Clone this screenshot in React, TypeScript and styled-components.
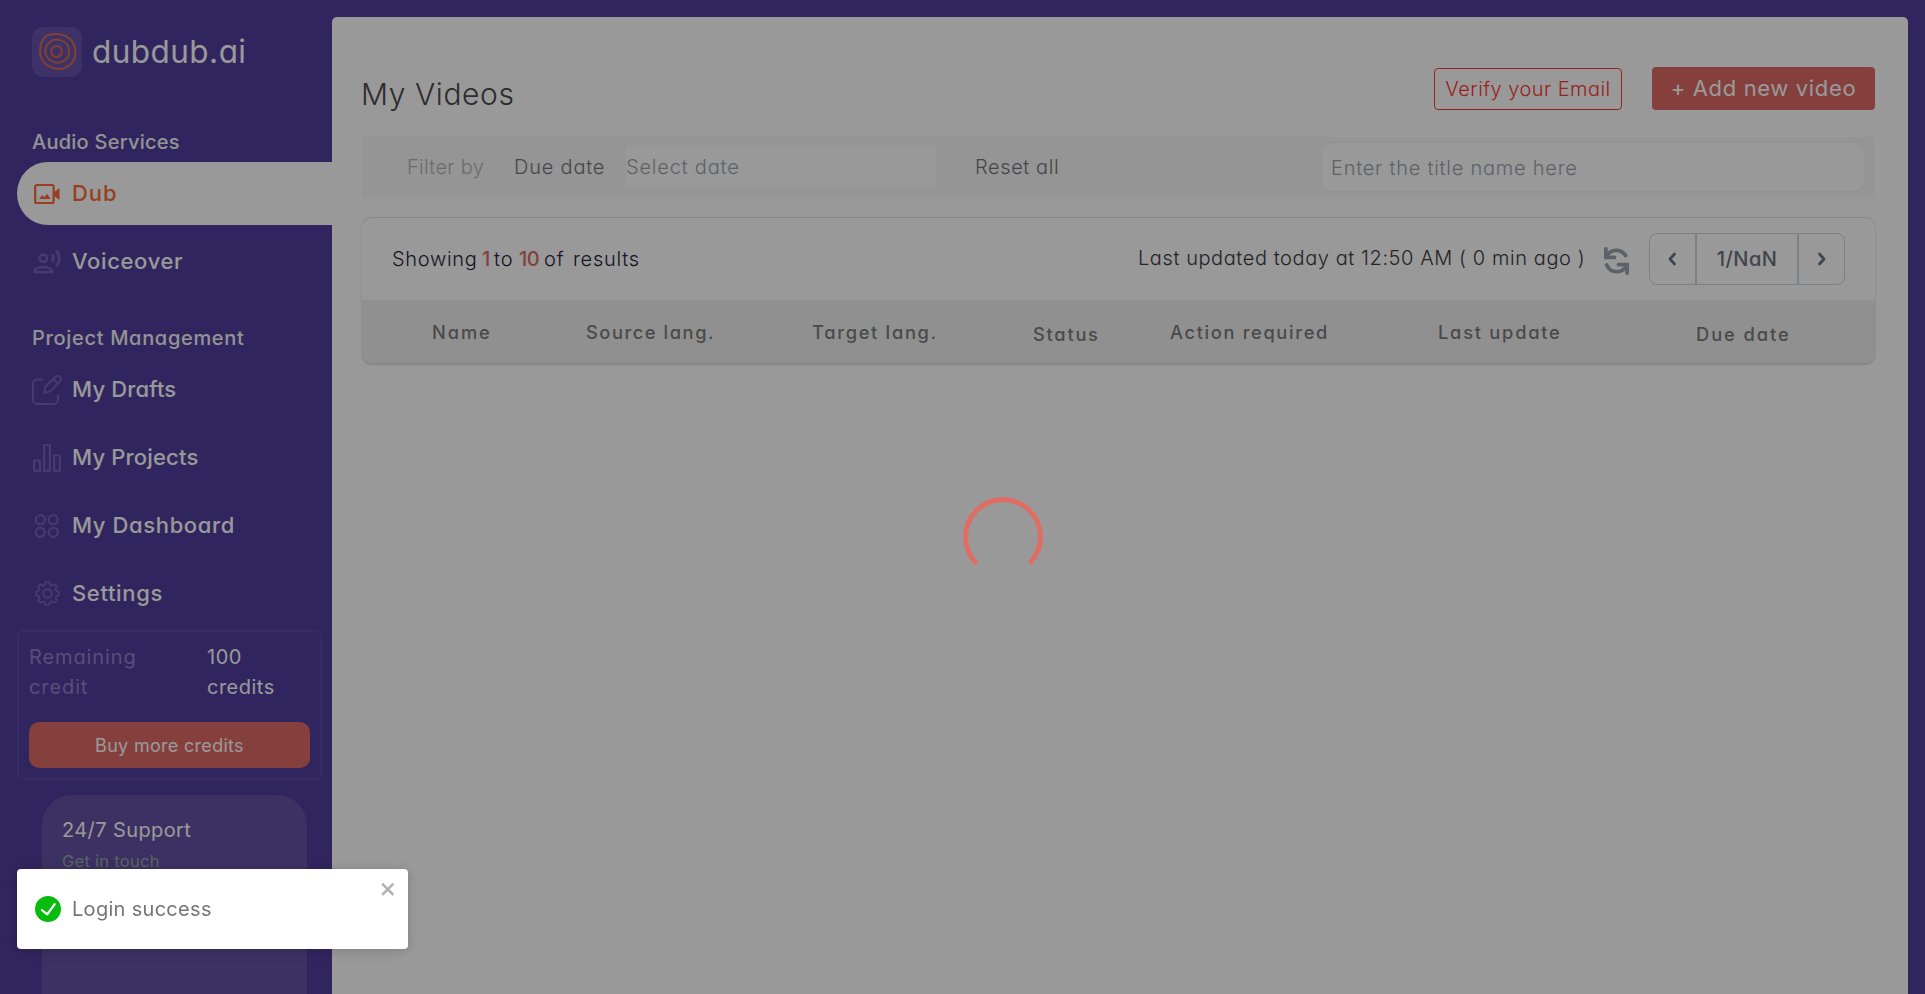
import React from "react";
import styled, { createGlobalStyle } from "styled-components";
import { BsGear } from "react-icons/bs";
import { MdOutlineRecordVoiceOver } from "react-icons/md";

const GlobalStyle = createGlobalStyle`
  *, *::before, *::after { box-sizing: border-box; }
  body {
    margin: 0;
    overflow: hidden;
    background: #503e9d;
    font-family: Inter, "Open Sans", sans-serif;
    font-feature-settings: "cv11";
    font-size: 20px;
    color: #111827;
  }
  button, input { font: inherit; font-feature-settings: inherit; letter-spacing: inherit; }
  svg { display: block; flex: none; }
`;

const Page = styled.div`
  display: flex;
  height: 994px;
  padding-right: 17px;
  overflow: hidden;
`;

/* ---------- sidebar ---------- */

const Sidebar = styled.aside`
  width: 332px;
  flex: none;
  display: flex;
  flex-direction: column;
  color: #fff;
`;

const Brand = styled.div`
  display: flex;
  align-items: center;
  gap: 10px;
  height: 50px;
  margin: 27px 0 50px 32px;
  font-size: 31.5px;
  letter-spacing: 0.45px;
`;

const BrandName = styled.span`
  padding-bottom: 2px;
`;

const BrandMark = styled.div`
  width: 50px;
  height: 50px;
  border-radius: 11px;
  background: #6654ac;
`;

const SectionTitle = styled.h2<{ $spacing: number }>`
  margin: 0 0 5px 32px;
  line-height: 30px;
  font-size: 20px;
  font-weight: 500;
  letter-spacing: ${(p) => p.$spacing}px;
  color: #f6f6f6;
`;

const Nav = styled.nav`
  display: flex;
  flex-direction: column;
  gap: 5px;

  & + h2 { margin-top: 30px; }
`;

const NavItem = styled.a<{ $active?: boolean; $spacing: number }>`
  display: flex;
  align-items: center;
  gap: 10px;
  height: 63px;
  margin-left: 17px;
  padding-left: 15px;
  border-radius: 31px 0 0 31px;
  font-size: 22px;
  font-weight: 500;
  letter-spacing: ${(p) => p.$spacing}px;
  background: ${(p) => (p.$active ? "#fff" : "transparent")};
  color: ${(p) => (p.$active ? "#fc6a38" : "#fff")};

  svg { color: ${(p) => (p.$active ? "#fc6a38" : "#7561be")}; }
`;

const NavLabel = styled.span`
  padding-bottom: 1px;
`;

const IconSlot = styled.span`
  width: 30px;
  display: flex;
  justify-content: center;
`;

const CreditBox = styled.section`
  width: 305px;
  margin: 5px 0 0 17px;
  padding: 10px;
  border: 2px solid #5b49a7;
  border-radius: 6px;
`;

const CreditRow = styled.div`
  display: grid;
  grid-template-columns: 178px 1fr;
  line-height: 30px;
`;

const CreditLabel = styled.span`
  width: 110px;
  color: #9484cb;
  letter-spacing: 0.9px;
`;

const CreditValue = styled.span`
  width: 72px;
  color: #fff;
  letter-spacing: 0.5px;
`;

const BuyButton = styled.button`
  display: block;
  width: 100%;
  height: 46px;
  margin-top: 20px;
  padding: 0;
  border: 0;
  border-radius: 10px;
  background: #de6b66;
  color: #fff;
  font-size: 18px;
  letter-spacing: 0.3px;
`;

const Support = styled.section`
  flex: 1;
  width: 265px;
  margin: 15px 0 0 42px;
  padding: 20px;
  border-radius: 30px 30px 0 0;
  background: #6452a3;
`;

const SupportTitle = styled.div`
  line-height: 30px;
  letter-spacing: 0.4px;
`;

const SupportLink = styled.div`
  margin-top: 1px;
  line-height: 30px;
  font-size: 16.5px;
  letter-spacing: 0.28px;
  color: #93a8a4;
`;

/* ---------- main panel ---------- */

const Main = styled.main`
  flex: 1;
  margin-top: 17px;
  padding: 50px 33px 0 30px;
  border-radius: 5px 5px 0 0;
  background: #fff;
`;

const Header = styled.header`
  display: flex;
  align-items: flex-start;
  gap: 30px;
  height: 70px;
`;

const Title = styled.h1`
  margin: 0 auto 0 -1px;
  padding-top: 6px;
  line-height: 43px;
  font-size: 30px;
  font-weight: 300;
  letter-spacing: 0.6px;
  color: #4c4c4c;
`;

const VerifyButton = styled.button`
  width: 188px;
  height: 42px;
  margin-top: 1px;
  padding: 0;
  border: 1px solid #ff3832;
  border-radius: 4px;
  background: none;
  color: #ff3832;
  font-weight: 300;
  letter-spacing: 0.45px;
`;

const AddButton = styled.button`
  width: 223px;
  height: 43px;
  padding: 0 0 1px;
  border: 0;
  border-radius: 4px;
  background: #de6b66;
  color: #fff;
  font-size: 22px;
  letter-spacing: 0.65px;
`;

const FilterBar = styled.div`
  display: flex;
  align-items: center;
  height: 60px;
  padding: 0 10px 0 45px;
  background: #f8f8f8;
  font-weight: 300;
  letter-spacing: 0.8px;
  color: #777;
`;

const FilterLabel = styled.span`
  width: 107px;
  letter-spacing: 0.3px;
  color: #b4b4b4;
`;

const FilterName = styled.span`
  width: 112px;
`;

const DateInput = styled.input`
  width: 310px;
  height: 40px;
  padding: 0;
  border: 0;
  background: #fff;
  &::placeholder { color: #9ca3af; opacity: 1; }
`;

const ResetAll = styled.span`
  margin: 0 auto 0 39px;
  letter-spacing: 0.6px;
`;

const SearchInput = styled.input`
  width: 544px;
  height: 50px;
  padding: 2px 9px 0;
  border: 1px solid #f3f3f3;
  border-radius: 12px;
  background: #fff;
  letter-spacing: 0.76px;
  &::placeholder { color: #9ca3af; opacity: 1; }
`;

const Card = styled.section`
  margin-top: 21px;
  border-radius: 9px;
  box-shadow: 0 -1px 0 rgba(0, 0, 0, 0.08), 0 0 2px rgba(0, 0, 0, 0.14), 0 2px 2px rgba(0, 0, 0, 0.12);
`;

const CardTop = styled.div`
  display: flex;
  align-items: center;
  height: 82px;
  padding: 0 30px;
  font-weight: 300;
`;

const Word = styled.span<{ $width: number; $spacing: number; $accent?: boolean }>`
  width: ${(p) => p.$width}px;
  white-space: nowrap;
  letter-spacing: ${(p) => p.$spacing}px;
  color: ${(p) => (p.$accent ? "#de6b66" : "#26263a")};
  font-weight: ${(p) => (p.$accent ? 500 : 300)};
`;

const Updated = styled.span`
  width: 466px;
  margin-left: auto;
  padding-bottom: 2px;
  white-space: nowrap;
  letter-spacing: 0.58px;
  color: #3c3c3c;
`;

const RefreshButton = styled.span`
  margin: 4px 20px 0 0;
  color: #9ca3af;
`;

const Pager = styled.div`
  display: flex;
  height: 52px;
  color: #6b7280;
`;

const PagerCell = styled.span<{ $width: number }>`
  display: flex;
  align-items: center;
  justify-content: center;
  width: ${(p) => p.$width}px;
  border: 1px solid #d1d5db;
  font-weight: 500;
  letter-spacing: 0.45px;

  &:first-child { border-radius: 8px 0 0 8px; }
  &:last-child { border-radius: 0 8px 8px 0; }
`;

const TableHead = styled.div`
  display: grid;
  grid-template-columns: 154px 226px 221px 137px 268px 258px 1fr;
  align-items: center;
  height: 63px;
  padding-left: 70px;
  border-radius: 0 0 9px 9px;
  background: #f1f1f1;
  color: #7c7c7c;
  font-size: 18.3px;
  font-weight: 500;
`;

const HeadCell = styled.span<{ $spacing: number; $lowered?: boolean }>`
  padding-top: ${(p) => (p.$lowered ? 4 : 0)}px;
  letter-spacing: ${(p) => p.$spacing}px;
  white-space: nowrap;
`;

/* ---------- layers over the page ---------- */

const Overlay = styled.div`
  position: fixed;
  inset: 0;
  background: rgba(0, 0, 0, 0.4);
`;

const Spinner = styled.div`
  position: absolute;
  left: 963px;
  top: 497px;
  width: 80px;
  height: 80px;
  border: 5px solid #e06d63;
  border-bottom-color: transparent;
  border-radius: 50%;
`;

const Toast = styled.div`
  position: fixed;
  left: 17px;
  top: 869px;
  display: flex;
  align-items: center;
  gap: 11px;
  width: 391px;
  height: 80px;
  padding-left: 18px;
  border-radius: 4px;
  background: #fff;
  box-shadow: 0 1px 10px rgba(0, 0, 0, 0.1), 0 2px 15px rgba(0, 0, 0, 0.1);
  color: #757575;
  letter-spacing: 0.3px;
`;

const ToastClose = styled.span`
  position: absolute;
  right: 11px;
  top: 10px;
  color: rgba(0, 0, 0, 0.3);
`;

/* ---------- drawings ---------- */

const LogoIcon = () => (
  <svg width="50" height="50" viewBox="0 0 50 50" fill="none" stroke="#dc6a50" strokeWidth="2">
    <path d="M16 8.2C21 6.4 29 6.6 34 9.2C39 12 42.8 17.500 43.300 23C43.800 28 42.800 33 39.500 36.200C36 39.600 30.500 42.200 26 42C21 41.600 14 38.500 11 34C8.200 30 7.600 25.500 8.200 21C9 15.500 11.500 10 16 8.200Z" />
    <path d="M19.500 14C22 12 26 12.400 29.500 13.600C33.500 15 36.600 18.500 37 22.500C37.400 26 36.600 30 33.800 32.200C31 34.400 27 36.400 23.800 35.600C20 34.600 15.600 31.600 14.200 28C12.800 24.500 13 21.500 14.600 19C16 16.800 17.600 15.600 19.500 14Z" />
    <path d="M22 19.600C24 18.700 26.600 18.800 28.200 20.400C29.800 22 30.300 24.500 29.300 26.800C28.200 29 25.600 30.400 23.300 29.900C20.800 29.300 19.300 27.200 19.300 24.600C19.300 22.400 20.200 20.400 22 19.600Z" />
  </svg>
);

const DubIcon = () => (
  <svg width="26" height="22" viewBox="0 0 26 22">
    <rect x="1.200" y="2" width="18.400" height="18" rx="1.500" fill="none" stroke="currentColor" strokeWidth="2.200" />
    <path d="M5 16 8.200 12 10.200 14.300 13 10.800 16.500 16Z" fill="currentColor" />
    <path d="M19.500 9.500 25.500 5V17L19.500 12.500Z" fill="currentColor" />
  </svg>
);

const DraftIcon = () => (
  <svg width="30" height="32" viewBox="0 0 30 32" fill="none" stroke="currentColor" strokeWidth="2" strokeLinecap="round" strokeLinejoin="round">
    <path d="M10 5.500H5A4 4 0 0 0 1 9.500V26A4 4 0 0 0 5 30H22A4 4 0 0 0 26 26V21" />
    <path d="M12 19 13.500 12.800 23.500 2.800A3.200 3.200 0 0 1 28 7.400L18.300 17.300Z" />
    <path d="M21.300 5.200 25.700 9.600" />
  </svg>
);

const BarsIcon = () => (
  <svg width="28" height="28" viewBox="0 0 28 28" fill="none" stroke="currentColor" strokeWidth="2.200" strokeLinejoin="round">
    <rect x="1.100" y="16.500" width="5.800" height="10.400" />
    <rect x="11.100" y="1.100" width="5.800" height="25.800" />
    <rect x="21.100" y="11.500" width="5.800" height="15.400" />
  </svg>
);

const DashboardIcon = () => (
  <svg width="26" height="26" viewBox="0 0 26 26" fill="none" stroke="currentColor" strokeWidth="2.300">
    <circle cx="6.300" cy="6.700" r="4.500" />
    <circle cx="19.300" cy="6.700" r="4.500" />
    <circle cx="6.300" cy="19.300" r="4.500" />
    <circle cx="19.300" cy="19.300" r="4.500" />
  </svg>
);

const RefreshIcon = () => (
  <svg width="25" height="28" viewBox="0 0 25 28" fill="none" stroke="currentColor" strokeWidth="3.800" strokeLinecap="round">
    <path d="M1.900 2V10.300H10.500" strokeLinejoin="miter" />
    <path d="M2.500 9.500C6 1.800 18 .500 22.300 10" strokeLinecap="butt" />
    <path d="M23.100 26V17.700H14.500" />
    <path d="M22.500 18.500C19 26.200 7 27.500 2.700 18" />
  </svg>
);

const Chevron = ({ d }: { d: string }) => (
  <svg width="9" height="14" viewBox="0 0 9 14" fill="none" stroke="currentColor" strokeWidth="2.700" strokeLinecap="round" strokeLinejoin="round">
    <path d={d} />
  </svg>
);

const SuccessIcon = () => (
  <svg width="26" height="26" viewBox="0 0 24 24" fill="#07bc0c">
    <path d="M12 0a12 12 0 1012 12A12.014 12.014 0 0012 0zm6.927 8.200l-6.845 9.289a1.011 1.011 0 01-1.430.188l-4.888-3.908a1 1 0 111.250-1.562l4.076 3.261 6.227-8.451a1 1 0 111.610 1.183z" />
  </svg>
);

const CloseIcon = () => (
  <svg width="17.500" height="20" viewBox="0 0 14 16" fill="currentColor">
    <path d="M7.710 8.230l3.750 3.750-1.480 1.480-3.750-3.750-3.750 3.750L1 11.980l3.750-3.750L1 4.480 2.480 3l3.750 3.750L9.980 3l1.480 1.480-3.750 3.750z" />
  </svg>
);

/* ---------- data ---------- */

const services = [
  { label: "Dub", icon: <DubIcon />, spacing: 0.9, active: true },
  { label: "Voiceover", icon: <MdOutlineRecordVoiceOver size={30} />, spacing: 0.65 },
];

const management = [
  { label: "My Drafts", icon: <DraftIcon />, spacing: 0.15 },
  { label: "My Projects", icon: <BarsIcon />, spacing: 0.17 },
  { label: "My Dashboard", icon: <DashboardIcon />, spacing: 0.62 },
  { label: "Settings", icon: <BsGear size={25} strokeWidth={0.4} />, spacing: 0.65 },
];

const columns = [
  { label: "Name", spacing: 1.9 },
  { label: "Source lang.", spacing: 1.55 },
  { label: "Target lang.", spacing: 1.7 },
  { label: "Status", spacing: 1.75, lowered: true },
  { label: "Action required", spacing: 1.65 },
  { label: "Last update", spacing: 1.75 },
  { label: "Due date", spacing: 1.95, lowered: true },
];

type Entry = { label: string; icon: React.ReactNode; spacing: number; active?: boolean };

const NavList = ({ entries }: { entries: Entry[] }) => (
  <Nav>
    {entries.map((e) => (
      <NavItem key={e.label} $active={e.active} $spacing={e.spacing}>
        <IconSlot>{e.icon}</IconSlot>
        <NavLabel>{e.label}</NavLabel>
      </NavItem>
    ))}
  </Nav>
);

export default function App() {
  return (
    <>
      <GlobalStyle />
      <Page>
        <Sidebar>
          <Brand>
            <BrandMark><LogoIcon /></BrandMark>
            <BrandName>dubdub.ai</BrandName>
          </Brand>
          <SectionTitle $spacing={0.25}>Audio Services</SectionTitle>
          <NavList entries={services} />
          <SectionTitle $spacing={0.68}>Project Management</SectionTitle>
          <NavList entries={management} />
          <CreditBox>
            <CreditRow>
              <CreditLabel>Remaining credit</CreditLabel>
              <CreditValue>100 credits</CreditValue>
            </CreditRow>
            <BuyButton>Buy more credits</BuyButton>
          </CreditBox>
          <Support>
            <SupportTitle>24/7 Support</SupportTitle>
            <SupportLink>Get in touch</SupportLink>
          </Support>
        </Sidebar>

        <Main>
          <Header>
            <Title>My Videos</Title>
            <VerifyButton>Verify your Email</VerifyButton>
            <AddButton>+ Add new video</AddButton>
          </Header>
          <FilterBar>
            <FilterLabel>Filter by</FilterLabel>
            <FilterName>Due date</FilterName>
            <DateInput placeholder="Select date" />
            <ResetAll>Reset all</ResetAll>
            <SearchInput placeholder="Enter the title name here" />
          </FilterBar>
          <Card>
            <CardTop>
              <Word $width={90} $spacing={0.7}>Showing</Word>
              <Word $width={12} $spacing={0} $accent>1</Word>
              <Word $width={25} $spacing={1}>to</Word>
              <Word $width={25} $spacing={-0.5} $accent>10</Word>
              <Word $width={29} $spacing={0.8}>of</Word>
              <Word $width={70} $spacing={0.75}>results</Word>
              <Updated>Last updated today at 12:50 AM ( 0 min ago )</Updated>
              <RefreshButton><RefreshIcon /></RefreshButton>
              <Pager>
                <PagerCell $width={47}><Chevron d="M6.500 2 2 7 6.500 12" /></PagerCell>
                <PagerCell $width={102}>1/NaN</PagerCell>
                <PagerCell $width={47}><Chevron d="M2.500 2 7 7 2.500 12" /></PagerCell>
              </Pager>
            </CardTop>
            <TableHead>
              {columns.map((c) => (
                <HeadCell key={c.label} $spacing={c.spacing} $lowered={c.lowered}>{c.label}</HeadCell>
              ))}
            </TableHead>
          </Card>
        </Main>
      </Page>
      <Overlay>
        <Spinner />
      </Overlay>
      <Toast>
        <SuccessIcon />
        Login success
        <ToastClose><CloseIcon /></ToastClose>
      </Toast>
    </>
  );
}
